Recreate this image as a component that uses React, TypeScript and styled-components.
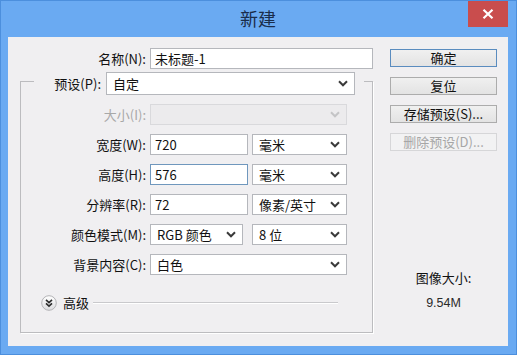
import React from 'react';
import styled, { createGlobalStyle } from 'styled-components';

const Global = createGlobalStyle`
  html, body { margin: 0; padding: 0; }
  body {
    width: 517px;
    height: 355px;
    overflow: hidden;
    font-family: "Noto Sans CJK SC", "Microsoft YaHei", sans-serif;
    font-size: 13px;
    color: #111;
  }
  * { box-sizing: border-box; }
`;

const Window = styled.div`
  width: 517px;
  height: 355px;
  background: #6aaaf2;
  border: 1px solid #4c8fdd;
  padding: 0 8px 8px 7px;
  display: flex;
  flex-direction: column;
`;

const TitleBar = styled.div`
  height: 36px;
  display: grid;
  grid-template-columns: 1fr auto 1fr;
  align-items: start;
`;

const Title = styled.div`
  grid-column: 2;
  font-size: 18px;
  line-height: 22px;
  margin-top: 6px;
  color: #1a2d4a;
`;

const CloseButton = styled.div`
  grid-column: 3;
  justify-self: end;
  width: 40px;
  height: 26px;
  background: #c94d4d;
  display: flex;
  align-items: center;
  justify-content: center;
`;

const Client = styled.div`
  flex: 1;
  background: #f0eff1;
  display: flex;
  padding: 11px 11px 0 0;
`;

const LeftPane = styled.div`
  width: 365px;
  display: flex;
  flex-direction: column;
`;

const RightPane = styled.div`
  width: 107px;
  margin-left: 17px;
  display: flex;
  flex-direction: column;
  align-items: stretch;
`;

const Row = styled.div`
  display: flex;
  align-items: center;
  height: 21px;
`;

const Label = styled.div<{ $width: number; $disabled?: boolean }>`
  width: ${p => p.$width}px;
  text-align: right;
  padding-right: 4px;
  white-space: nowrap;
  line-height: 21px;
  color: ${p => (p.$disabled ? '#a8a8a8' : '#111')};
`;

const TextBox = styled.div<{ $width: number; $focused?: boolean }>`
  width: ${p => p.$width}px;
  height: 21px;
  background: #fff;
  border: 1px solid ${p => (p.$focused ? '#6f97bd' : '#b5b7bc')};
  padding-left: 4px;
  line-height: 19px;
  white-space: nowrap;
`;

const SelectBox = styled.div<{ $width: number; $height?: number; $disabled?: boolean }>`
  width: ${p => p.$width}px;
  height: ${p => p.$height ?? 21}px;
  background: ${p => (p.$disabled ? '#ecebed' : '#fff')};
  border: 1px solid ${p => (p.$disabled ? '#d9d9dc' : '#b5b7bc')};
  display: flex;
  align-items: center;
  padding: 0 6px 0 6px;
  white-space: nowrap;
`;

const SelectText = styled.span`
  flex: 1;
`;

const ChevronSvg = styled.svg<{ $disabled?: boolean }>`
  stroke: ${p => (p.$disabled ? '#c4c4c6' : '#3a3a3a')};
  flex: none;
`;

const Gap = styled.div<{ $w: number }>`
  width: ${p => p.$w}px;
  flex: none;
`;

const GroupBox = styled.div`
  margin: 12px 0 0 12px;
  width: 353px;
  height: 252px;
  border: 1px solid #bcbcbf;
  box-shadow: 1px 1px 0 #ffffff;
  display: flex;
  flex-direction: column;
`;

const PresetRow = styled.div`
  margin: -10px 0 0 13px;
  width: 330px;
  height: 23px;
  background: #f0eff1;
  display: flex;
  align-items: center;
  padding-right: 9px;
`;

const PresetLabel = styled.div`
  flex: 1;
  text-align: right;
  padding-right: 5px;
  line-height: 23px;
`;

const GroupRow = styled(Row)`
  margin-top: 9px;
`;

const AdvancedRow = styled.div`
  margin: 20px 34px 0 20px;
  height: 16px;
  display: flex;
  align-items: center;
`;

const AdvancedText = styled.span`
  margin: 0 4px 0 6px;
  line-height: 16px;
`;

const AdvancedLine = styled.div`
  flex: 1;
  height: 2px;
  border-top: 1px solid #c9c9cc;
  border-bottom: 1px solid #ffffff;
`;

const Button = styled.div<{ $default?: boolean; $disabled?: boolean }>`
  height: 18px;
  margin-bottom: 10px;
  border: 1px solid ${p => (p.$default ? '#5a8cbf' : p.$disabled ? '#d6d6d8' : '#acacac')};
  background: ${p =>
    p.$disabled ? '#f2f2f3' : 'linear-gradient(#f0f0f0, #e3e3e3)'};
  color: ${p => (p.$disabled ? '#a6a6a6' : '#111')};
  text-align: center;
  line-height: 16px;
  white-space: nowrap;
`;

const Buttons = styled.div`
  margin-top: 1px;
  display: flex;
  flex-direction: column;
`;

const SizeTitle = styled.div`
  margin-top: 108px;
  text-align: center;
  line-height: 18px;
`;

const SizeValue = styled.div`
  margin-top: 7px;
  text-align: center;
  line-height: 18px;
  font-family: "Liberation Sans", Arial, sans-serif;
  font-size: 12.5px;
  color: #2a2a2a;
`;

const Chevron = ({ disabled }: { disabled?: boolean }) => (
  <ChevronSvg width="10" height="7" viewBox="0 0 10 7" $disabled={disabled}>
    <path d="M1 1.3 L5 5.3 L9 1.3" fill="none" strokeWidth="2" />
  </ChevronSvg>
);

const Select = ({
  width,
  height,
  value,
  disabled,
}: {
  width: number;
  height?: number;
  value?: string;
  disabled?: boolean;
}) => (
  <SelectBox $width={width} $height={height} $disabled={disabled}>
    <SelectText>{value}</SelectText>
    <Chevron disabled={disabled} />
  </SelectBox>
);

const AdvancedIcon = () => (
  <svg width="16" height="16" viewBox="0 0 16 16">
    <defs>
      <linearGradient id="adv" x1="0" y1="0" x2="0" y2="1">
        <stop offset="0" stopColor="#ffffff" />
        <stop offset="1" stopColor="#dcdcdf" />
      </linearGradient>
    </defs>
    <circle cx="8" cy="8" r="7.3" fill="url(#adv)" stroke="#b3b3b6" strokeWidth="1" />
    <path d="M5 4.8 L8 7.6 L11 4.8 M5 8.4 L8 11.2 L11 8.4" fill="none" stroke="#2d2d2d" strokeWidth="1.6" />
  </svg>
);

export default function App() {
  return (
    <>
      <Global />
      <Window>
        <TitleBar>
          <Title>新建</Title>
          <CloseButton>
            <svg width="12" height="10" viewBox="0 0 12 10">
              <path d="M1.5 0.8 L10.5 9.2 M10.5 0.8 L1.5 9.2" stroke="#fff" strokeWidth="2.2" />
            </svg>
          </CloseButton>
        </TitleBar>
        <Client>
          <LeftPane>
            <Row>
              <Label $width={142}>名称(N):</Label>
              <TextBox $width={223}>未标题-1</TextBox>
            </Row>
            <GroupBox>
              <PresetRow>
                <PresetLabel>预设(P):</PresetLabel>
                <Select width={249} height={23} value="自定" />
              </PresetRow>
              <GroupRow>
                <Label $width={129} $disabled>大小(I):</Label>
                <Select width={197} disabled />
              </GroupRow>
              <GroupRow>
                <Label $width={129}>宽度(W):</Label>
                <TextBox $width={98}>720</TextBox>
                <Gap $w={4} />
                <Select width={95} value="毫米" />
              </GroupRow>
              <GroupRow>
                <Label $width={129}>高度(H):</Label>
                <TextBox $width={98} $focused>576</TextBox>
                <Gap $w={4} />
                <Select width={95} value="毫米" />
              </GroupRow>
              <GroupRow>
                <Label $width={129}>分辨率(R):</Label>
                <TextBox $width={98}>72</TextBox>
                <Gap $w={4} />
                <Select width={95} value="像素/英寸" />
              </GroupRow>
              <GroupRow>
                <Label $width={129}>颜色模式(M):</Label>
                <Select width={93} value="RGB 颜色" />
                <Gap $w={9} />
                <Select width={95} value="8 位" />
              </GroupRow>
              <GroupRow>
                <Label $width={129}>背景内容(C):</Label>
                <Select width={197} value="白色" />
              </GroupRow>
              <AdvancedRow>
                <AdvancedIcon />
                <AdvancedText>高级</AdvancedText>
                <AdvancedLine />
              </AdvancedRow>
            </GroupBox>
          </LeftPane>
          <RightPane>
            <Buttons>
              <Button $default>确定</Button>
              <Button>复位</Button>
              <Button>存储预设(S)...</Button>
              <Button $disabled>删除预设(D)...</Button>
            </Buttons>
            <SizeTitle>图像大小:</SizeTitle>
            <SizeValue>9.54M</SizeValue>
          </RightPane>
        </Client>
      </Window>
    </>
  );
}
